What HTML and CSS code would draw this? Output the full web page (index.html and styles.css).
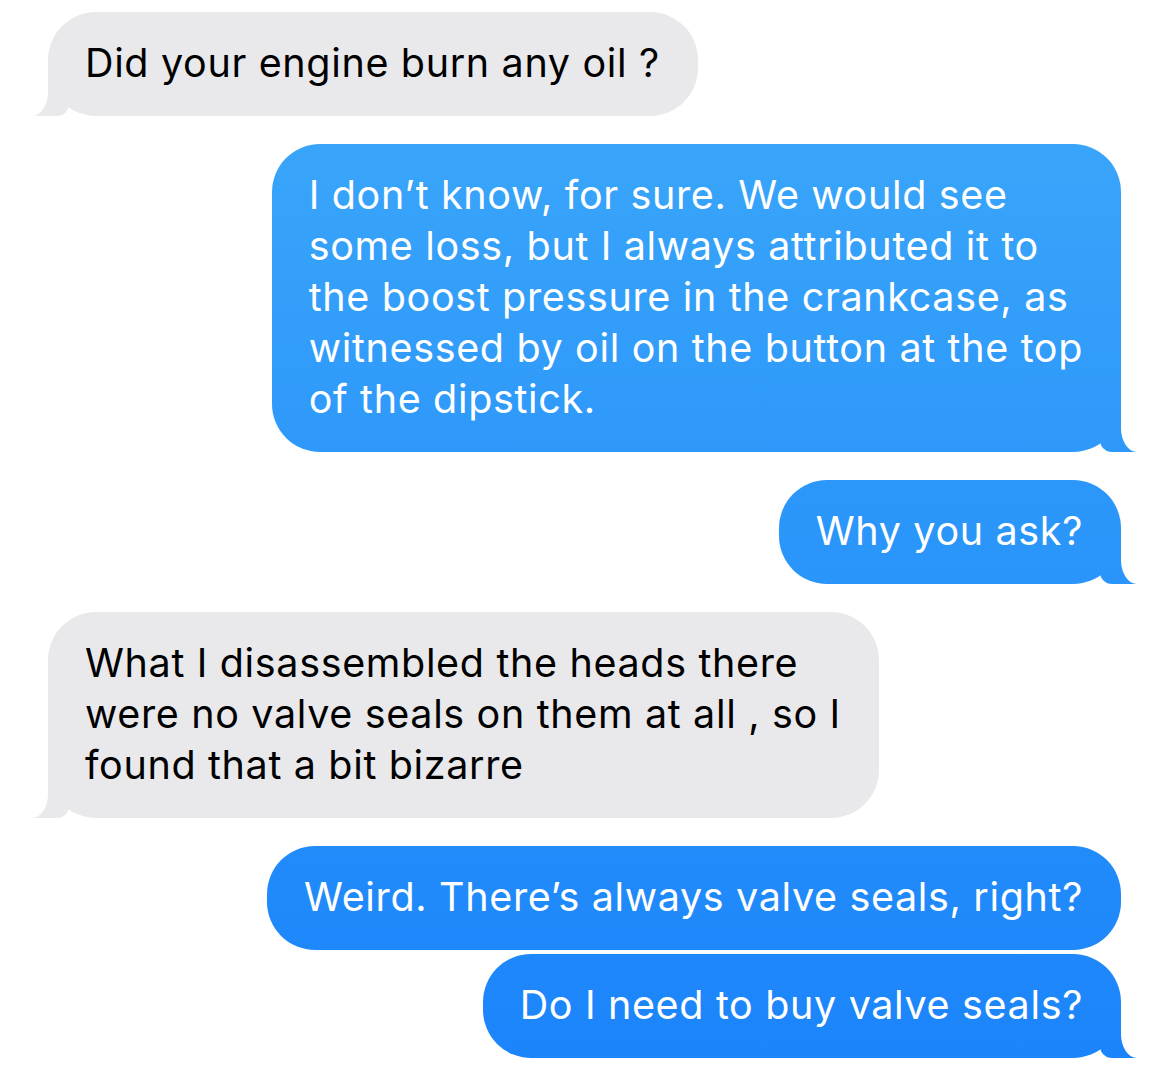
FILE: index.html
```html
<!DOCTYPE html>
<html lang="en">
<head>
    <meta charset="UTF-8">
    <meta name="viewport" content="width=device-width, initial-scale=1.0">
    <title>Messages</title>
    <link rel="stylesheet" href="styles.css">
</head>
<body>
    <div id="thread">
        <div class="msg them">Did your engine burn any oil ?</div>

        <div class="msg me">I don’t know, for sure. We would see<br>some loss, but I always attributed it to<br>the boost pressure in the crankcase, as<br>witnessed by oil on the button at the top<br>of the dipstick.</div>

        <div class="msg me">Why you ask?</div>

        <div class="msg them">What I disassembled the heads there<br>were no valve seals on them at all , so I<br>found that a bit bizarre</div>

        <div class="group">
            <div class="msg me no-tail">Weird. There’s always valve seals, right?</div>
            <div class="msg me">Do I need to buy valve seals?</div>
        </div>
    </div>
</body>
</html>
```

FILE: styles.css
```css
body {
    margin: 0;
    background-color: #ffffff;
    font-family: Inter, "Noto Sans", sans-serif;
}

#thread {
    display: flex;
    flex-direction: column;
    gap: 28px;
    padding: 12px 49px 0 48px;
}

.group {
    display: flex;
    flex-direction: column;
    gap: 4px;
}

.msg {
    position: relative;
    width: fit-content;
    padding: 26px 38px 27px 37px;
    border-radius: 48px;
    font-size: 39.5px;
    letter-spacing: 0.65px;
    line-height: 51px;
    white-space: nowrap;
}

.them {
    align-self: flex-start;
    background-color: #e9e9eb;
    color: #000000;
}

.me {
    align-self: flex-end;
    color: #ffffff;
    background: linear-gradient(180deg, #3eaaf9 0px, #2c97fa 500px, #1b84fb 1069px) fixed;
}

/* bubble tails */
.msg::before,
.msg::after {
    content: "";
    position: absolute;
    bottom: 0;
    height: 50px;
}

.me::before {
    right: -16px;
    width: 37px;
    background: inherit;
    border-bottom-left-radius: 12px 12px;
}

.me::after {
    right: -30px;
    width: 30px;
    background-color: #ffffff;
    border-bottom-left-radius: 16px 24px;
}

.them::before {
    left: -16px;
    width: 37px;
    background-color: #e9e9eb;
    border-bottom-right-radius: 12px 12px;
}

.them::after {
    left: -30px;
    width: 30px;
    background-color: #ffffff;
    border-bottom-right-radius: 16px 24px;
}

.no-tail::before,
.no-tail::after {
    display: none;
}
```
